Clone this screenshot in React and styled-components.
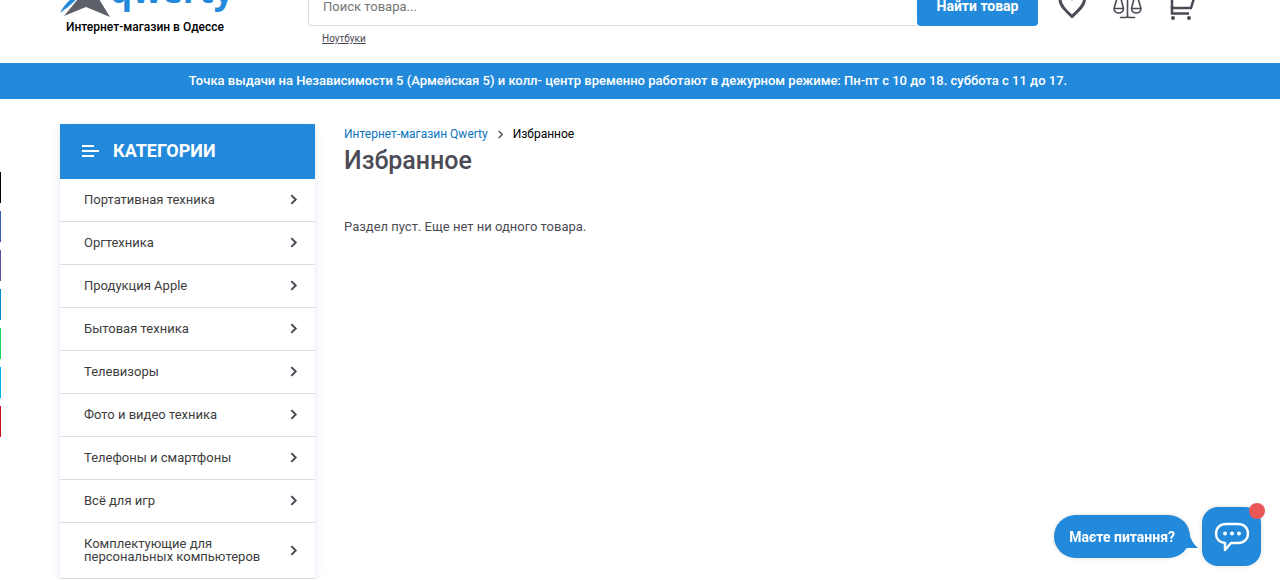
import React from "react";
import styled, { createGlobalStyle } from "styled-components";

const blue = "#238adb";
const dark = "#4c4b55";

const GlobalStyle = createGlobalStyle`
  * {
    box-sizing: border-box;
  }
  html {
    overflow: hidden;
  }
  body {
    margin: 0;
    background: #fff;
    color: ${dark};
    font-family: Roboto, "Noto Sans", sans-serif;
    font-size: 14px;
  }
`;

const Container = styled.div`
  max-width: 1160px;
  margin: 0 auto;
`;

const Header = styled.header`
  margin-top: -40px;
`;

const HeaderRow = styled(Container)`
  display: flex;
  height: 103px;
`;

const Brand = styled.a`
  width: 248px;
  color: #000;
  text-decoration: none;
`;

const LogoRow = styled.div`
  display: flex;
  height: 57px;
`;

const LogoName = styled.span`
  margin-left: -2px;
  color: ${blue};
  font-family: "Open Sans", sans-serif;
  font-size: 35px;
  font-weight: 700;
  line-height: 60px;
`;

const Slogan = styled.div`
  padding-left: 6px;
  font-size: 12px;
  line-height: 20px;
  font-weight: 500;
`;

const SearchColumn = styled.div`
  flex: 1;
  padding-top: 26px;
`;

const SearchForm = styled.form`
  display: flex;
  height: 40px;
`;

const SearchInput = styled.input`
  flex: 1;
  min-width: 0;
  padding: 0 14px;
  border: 1px solid #d9d9d9;
  border-right: 0;
  border-radius: 4px 0 0 4px;
  font-family: inherit;
  font-size: 13px;
  outline: none;
  &::placeholder {
    color: #757575;
    opacity: 1;
  }
`;

const SearchButton = styled.button`
  width: 121px;
  border: 0;
  border-radius: 4px;
  background: ${blue};
  color: #fff;
  font-family: inherit;
  font-size: 14px;
  font-weight: 700;
`;

const SearchHint = styled.a`
  display: inline-block;
  padding: 6px 14px;
  color: ${dark};
  font-size: 10px;
  line-height: 14px;
`;

const Actions = styled.nav`
  display: flex;
  gap: 26px;
  padding: 28px 23px 0 20px;
`;

const ActionLink = styled.a`
  height: 34px;
  color: ${dark};
`;

const Notice = styled.div`
  padding: 8px 24px 8px 0;
  background: ${blue};
  color: #fff;
  font-size: 13px;
  font-weight: 500;
  line-height: 20px;
  text-align: center;
`;

const Main = styled(Container)`
  display: flex;
  align-items: flex-start;
  gap: 29px;
  padding-top: 25px;
`;

const Sidebar = styled.aside`
  width: 255px;
  box-shadow: 0 2px 8px rgba(35, 100, 180, 0.14);
`;

const SidebarTitle = styled.div`
  display: flex;
  align-items: center;
  gap: 14px;
  height: 55px;
  padding: 0 22px 2px;
  background: ${blue};
  color: #fff;
  font-size: 18px;
  font-weight: 700;
`;

const CategoryList = styled.ul`
  margin: 0;
  padding: 0;
  list-style: none;
  background: #fff;
`;

const CategoryLink = styled.a`
  display: flex;
  align-items: center;
  justify-content: space-between;
  padding: 14px 16px 15px 24px;
  border-bottom: 1px solid #dedede;
  color: #3d3d3d;
  font-size: 13px;
  line-height: 13px;
  text-decoration: none;
`;

const CategoryName = styled.span`
  max-width: 190px;
`;

const Content = styled.main`
  flex: 1;
`;

const Breadcrumbs = styled.nav`
  display: flex;
  align-items: center;
  gap: 8px;
  color: #000;
  font-size: 12px;
  line-height: 20px;
  a {
    color: #0b74bd;
    text-decoration: none;
  }
`;

const Title = styled.h1`
  margin: 0 0 40px;
  font-size: 25px;
  font-weight: 500;
  line-height: 33px;
`;

const Empty = styled.p`
  margin: 0;
  font-size: 13px;
  line-height: 20px;
`;

const ShareBar = styled.div`
  position: fixed;
  top: 172px;
  left: 0;
  display: flex;
  flex-direction: column;
  gap: 8px;
`;

const ShareLink = styled.a`
  width: 1px;
  height: 31px;
  background: ${(props) => props.$color};
`;

const Chat = styled.div`
  position: fixed;
  right: 19px;
  bottom: 14px;
  display: flex;
  align-items: center;
  gap: 12px;
`;

const ChatBubble = styled.button`
  position: relative;
  height: 43px;
  padding: 0 15px;
  border: 0;
  border-radius: 22px;
  background: ${blue};
  box-shadow: 0 0 4px rgba(0, 0, 0, 0.15);
  color: #fff;
  font-family: inherit;
  font-size: 14px;
  font-weight: 700;
`;

const BubbleTail = styled.svg`
  position: absolute;
  right: -8px;
  bottom: 10px;
`;

const ChatButton = styled.button`
  position: relative;
  display: flex;
  align-items: center;
  justify-content: center;
  width: 59px;
  height: 59px;
  padding: 0;
  border: 0;
  border-radius: 16px;
  background: ${blue};
  box-shadow: 0 0 4px rgba(0, 0, 0, 0.15);
`;

const Dot = styled.span`
  position: absolute;
  top: -4px;
  right: -4px;
  width: 16px;
  height: 16px;
  border-radius: 50%;
  background: #eb5757;
`;

const categories = [
  "Портативная техника",
  "Оргтехника",
  "Продукция Apple",
  "Бытовая техника",
  "Телевизоры",
  "Фото и видео техника",
  "Телефоны и смартфоны",
  "Всё для игр",
  "Комплектующие для персональных компьютеров",
];

const shares = [
  { name: "X", color: "#000000" },
  { name: "Facebook", color: "#3b5bb0" },
  { name: "Viber", color: "#5f4da0" },
  { name: "Telegram", color: "#0088cc" },
  { name: "WhatsApp", color: "#1ad463" },
  { name: "Skype", color: "#00aff0" },
  { name: "Pinterest", color: "#cb0a1c" },
];

const Star = () => (
  <svg width="52" height="57" viewBox="0 0 52 57">
    <path d="M24 0L17 34C9 40 4 45 0 53L8 47L18 38Z" fill={blue} />
    <path d="M28 4L18 39L4 56L26 47L50 57L39 39Z" fill="#5d6069" />
  </svg>
);

const Heart = () => (
  <svg width="29" height="34" viewBox="0 0 29 34" fill="none">
    <path
      d="M14 28.500C8 23 2 17.500 2 11.500C2 7 5 4.500 8.500 4.500C11.500 4.500 13 6.500 14 9C15 6.500 17 4.500 20 4.500C23.500 4.500 26.500 7 26.500 11.500C26.500 17.500 20 23 14 28.500Z"
      stroke="currentColor"
      strokeWidth="3"
    />
  </svg>
);

const Scales = () => (
  <svg width="30" height="34" viewBox="0 0 30 34" fill="none">
    <g stroke="currentColor" strokeWidth="1.600" strokeLinecap="round" strokeLinejoin="round">
      <path d="M14.500 3V28M7.500 29.500H12.500C13.500 29.500 14.500 28.500 14.500 27.500C14.500 28.500 15.500 29.500 16.500 29.500H21.500M4 7H25" />
      <path d="M5 7L1 20.500H10.500L7 7ZM1 20.500C1 26.500 10.500 26.500 10.500 20.500" />
      <path d="M22 7L18.500 20.500H28L24 7ZM18.500 20.500C18.500 26.500 28 26.500 28 20.500" />
    </g>
  </svg>
);

const Cart = () => (
  <svg width="28" height="34" viewBox="0 0 28 34" fill="none">
    <path d="M0 2H3V20H22L26 7H3" stroke="currentColor" strokeWidth="2.500" />
    <path d="M3 18V25.500H20" stroke="currentColor" strokeWidth="2.500" />
    <circle cx="4" cy="30" r="2" fill="currentColor" />
    <circle cx="20" cy="30" r="2" fill="currentColor" />
  </svg>
);

const Chevron = ({ size = 11, width = 1.8 }) => (
  <svg width={size} height={size} viewBox="0 0 10 10" fill="none">
    <path d="M3 1L7 5L3 9" stroke={dark} strokeWidth={width} />
  </svg>
);

const MenuIcon = () => (
  <svg width="17" height="12" viewBox="0 0 17 12">
    <path d="M0 1H12M0 6H17M0 11H12" stroke="#fff" strokeWidth="2" />
  </svg>
);

const ChatIcon = () => (
  <svg width="36" height="30" viewBox="0 0 36 30" fill="none">
    <path
      d="M12 2H24C30 2 34 6 34 11.500C34 17 30 21 24 21H17L11 28V21C5.500 20.500 2 17 2 11.500C2 6 6 2 12 2Z"
      stroke="#fff"
      strokeWidth="2.400"
      strokeLinejoin="round"
    />
    <circle cx="11" cy="11.500" r="2" fill="#fff" />
    <circle cx="18" cy="11.500" r="2" fill="#fff" />
    <circle cx="25" cy="11.500" r="2" fill="#fff" />
  </svg>
);

const App = () => {
  return (
    <>
      <GlobalStyle />
      <Header>
        <HeaderRow>
          <Brand href="#">
            <LogoRow>
              <Star />
              <LogoName>qwerty</LogoName>
            </LogoRow>
            <Slogan>Интернет-магазин в Одессе</Slogan>
          </Brand>
          <SearchColumn>
            <SearchForm>
              <SearchInput
                type="text"
                placeholder="Поиск товара..."
                aria-label="Поиск товара"
              />
              <SearchButton type="button">Найти товар</SearchButton>
            </SearchForm>
            <SearchHint href="#">Ноутбуки</SearchHint>
          </SearchColumn>
          <Actions>
            <ActionLink href="#" aria-label="Избранное">
              <Heart />
            </ActionLink>
            <ActionLink href="#" aria-label="Сравнение">
              <Scales />
            </ActionLink>
            <ActionLink href="#" aria-label="Корзина">
              <Cart />
            </ActionLink>
          </Actions>
        </HeaderRow>
      </Header>
      <Notice>
        Точка выдачи на Независимости 5 (Армейская 5) и колл- центр временно
        работают в дежурном режиме: Пн-пт с 10 до 18. суббота с 11 до 17.
      </Notice>
      <Main>
        <Sidebar>
          <SidebarTitle>
            <MenuIcon />
            КАТЕГОРИИ
          </SidebarTitle>
          <CategoryList>
            {categories.map((name) => (
              <li key={name}>
                <CategoryLink href="#">
                  <CategoryName>{name}</CategoryName>
                  <Chevron />
                </CategoryLink>
              </li>
            ))}
          </CategoryList>
        </Sidebar>
        <Content>
          <Breadcrumbs>
            <a href="#">Интернет-магазин Qwerty</a>
            <Chevron size={9} width={1.5} />
            <span>Избранное</span>
          </Breadcrumbs>
          <Title>Избранное</Title>
          <Empty>Раздел пуст. Еще нет ни одного товара.</Empty>
        </Content>
      </Main>
      <ShareBar>
        {shares.map((item) => (
          <ShareLink
            key={item.name}
            href="#"
            aria-label={item.name}
            $color={item.color}
          />
        ))}
      </ShareBar>
      <Chat>
        <ChatBubble type="button">
          Маєте питання?
          <BubbleTail width="16" height="22" viewBox="0 0 16 22">
            <path d="M7 7Q9 16 16 22H0V7Z" fill={blue} />
          </BubbleTail>
        </ChatBubble>
        <ChatButton type="button" aria-label="Чат">
          <ChatIcon />
          <Dot />
        </ChatButton>
      </Chat>
    </>
  );
};

export default App;
